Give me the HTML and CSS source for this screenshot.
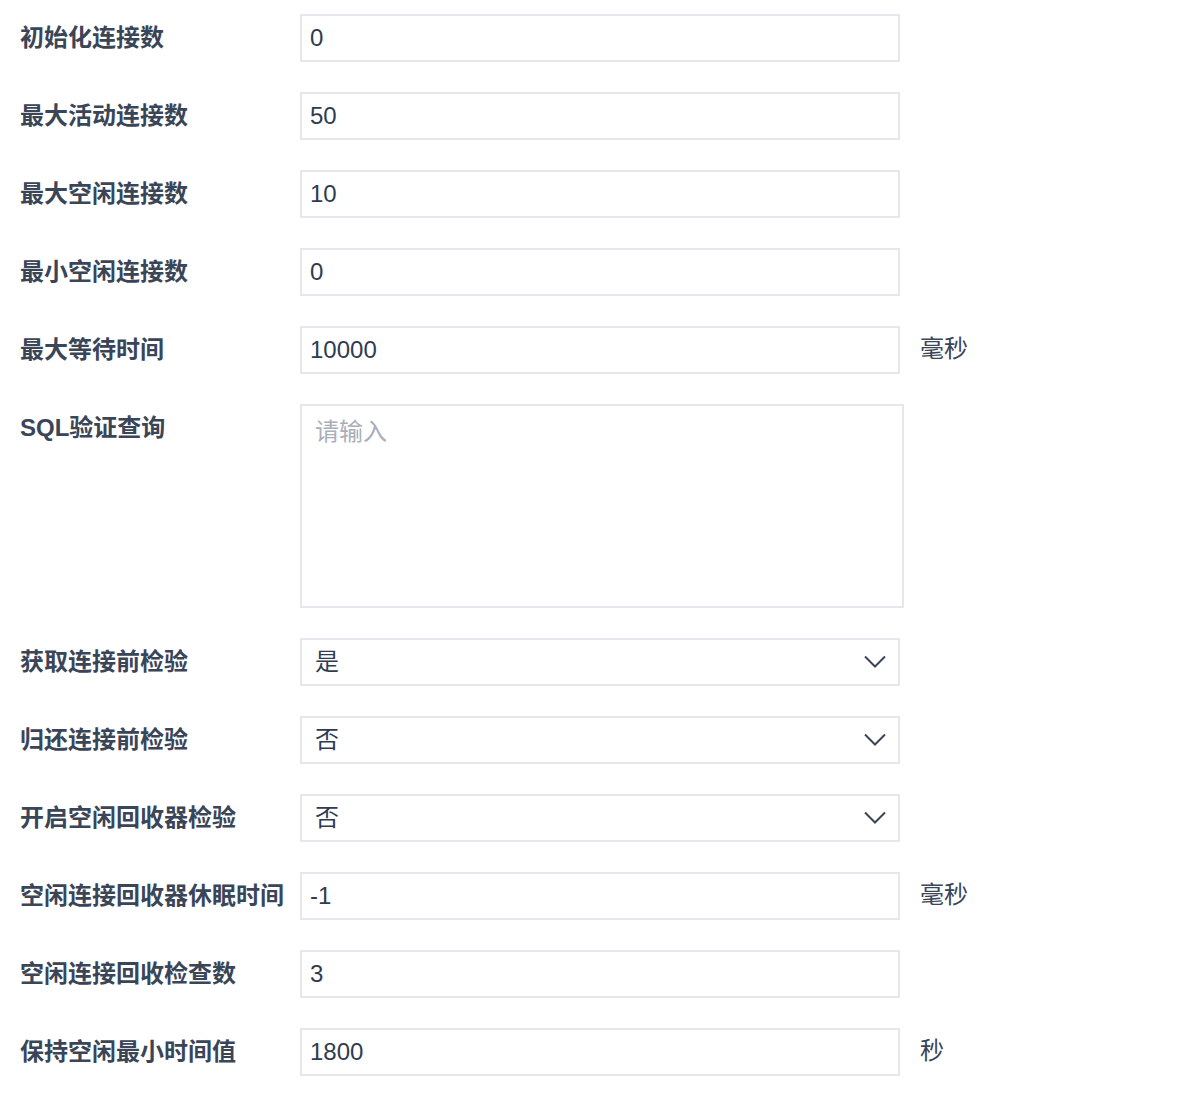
FILE: index.html
```html
<!DOCTYPE html>
<html lang="zh-CN">
<head>
<meta charset="utf-8">
<link rel="stylesheet" href="styles.css">
</head>
<body>
<div class="form">
  <div class="row"><div class="label">初始化连接数</div><div class="field">0</div></div>
  <div class="row"><div class="label">最大活动连接数</div><div class="field">50</div></div>
  <div class="row"><div class="label">最大空闲连接数</div><div class="field">10</div></div>
  <div class="row"><div class="label">最小空闲连接数</div><div class="field">0</div></div>
  <div class="row"><div class="label">最大等待时间</div><div class="field">10000</div><div class="unit">毫秒</div></div>
  <div class="row"><div class="label">SQL验证查询</div><div class="area">请输入</div></div>
  <div class="row"><div class="label">获取连接前检验</div><div class="field select"><span>是</span><svg class="chev" width="24" height="14" viewBox="0 0 24 14"><path d="M2 1.5 L12 11.5 L22 1.5" fill="none" stroke="#3a4557" stroke-width="2"/></svg></div></div>
  <div class="row"><div class="label">归还连接前检验</div><div class="field select"><span>否</span><svg class="chev" width="24" height="14" viewBox="0 0 24 14"><path d="M2 1.5 L12 11.5 L22 1.5" fill="none" stroke="#3a4557" stroke-width="2"/></svg></div></div>
  <div class="row"><div class="label">开启空闲回收器检验</div><div class="field select"><span>否</span><svg class="chev" width="24" height="14" viewBox="0 0 24 14"><path d="M2 1.5 L12 11.5 L22 1.5" fill="none" stroke="#3a4557" stroke-width="2"/></svg></div></div>
  <div class="row"><div class="label">空闲连接回收器休眠时间</div><div class="field">-1</div><div class="unit">毫秒</div></div>
  <div class="row"><div class="label">空闲连接回收检查数</div><div class="field">3</div></div>
  <div class="row"><div class="label">保持空闲最小时间值</div><div class="field">1800</div><div class="unit">秒</div></div>
</div>
</body>
</html>
```
FILE: styles.css
```css
html, body {
  margin: 0;
  padding: 0;
  background: #fff;
}
body {
  font-family: "Liberation Sans", "Noto Sans CJK SC", sans-serif;
  color: #34405a;
}
.form {
  display: flex;
  flex-direction: column;
  gap: 30px;
  padding: 14px 0 0 20px;
}
.row {
  display: flex;
  align-items: flex-start;
}
.label {
  width: 280px;
  flex: none;
  font-size: 24px;
  font-weight: 600;
  line-height: 48px;
  color: #3a4557;
  white-space: nowrap;
}
.field {
  box-sizing: border-box;
  width: 600px;
  height: 48px;
  border: 2px solid #e6e7ec;
  padding: 0 8px;
  font-size: 24px;
  line-height: 44px;
  color: #2f3b50;
  display: flex;
  align-items: center;
}
.select {
  padding: 0 11px 0 13px;
  justify-content: space-between;
}
.chev {
  display: block;
}
.area {
  box-sizing: border-box;
  width: 604px;
  height: 204px;
  border: 2px solid #e6e7ec;
  padding: 10px 13px;
  font-size: 24px;
  line-height: 32px;
  color: #a9aeb9;
}
.unit {
  margin-left: 20px;
  font-size: 24px;
  line-height: 46px;
  color: #3a4557;
}
```
